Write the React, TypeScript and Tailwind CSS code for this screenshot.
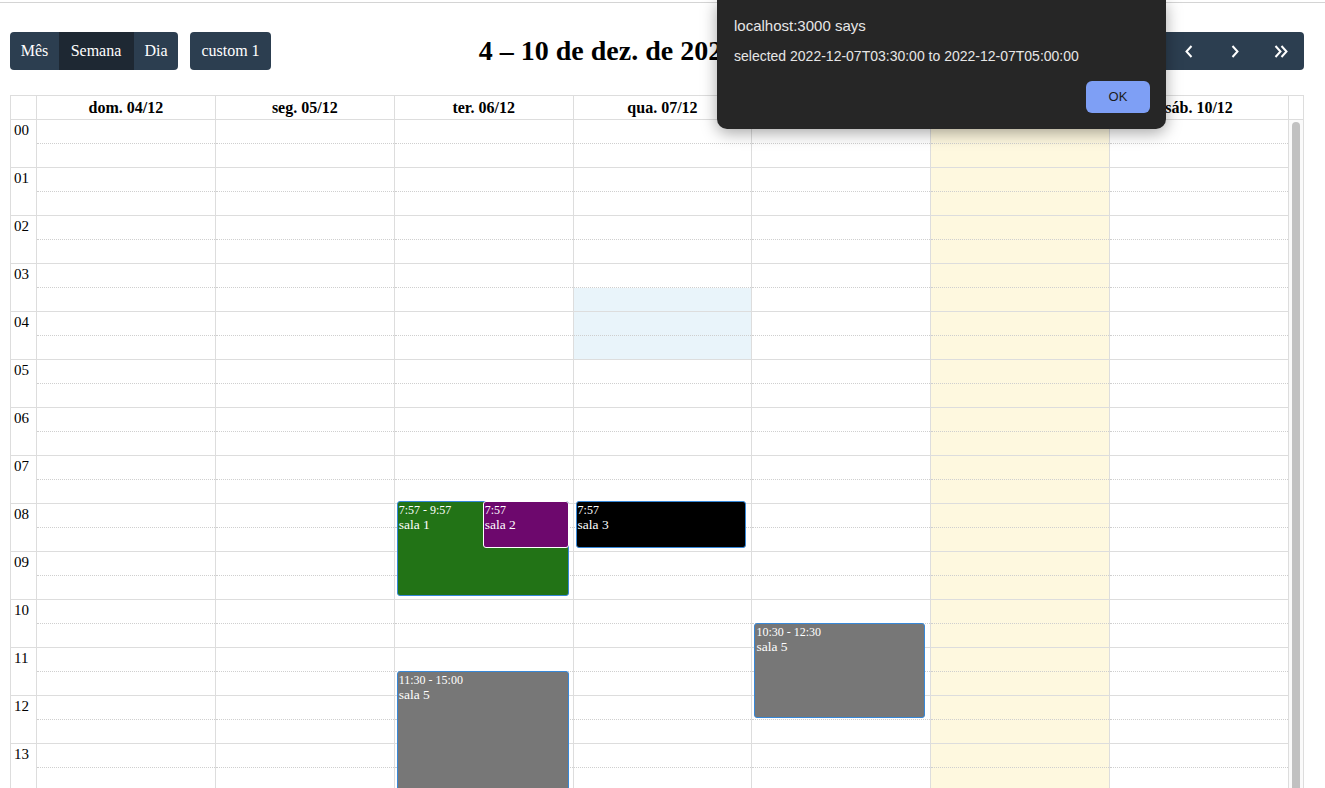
import React from "react";

const days = [
  "dom. 04/12",
  "seg. 05/12",
  "ter. 06/12",
  "qua. 07/12",
  "qui. 08/12",
  "sex. 09/12",
  "sáb. 10/12",
];

const hours = Array.from({ length: 24 }, (_, i) => String(i).padStart(2, "0"));

type Ev = {
  day: number;
  top: number;
  height: number;
  left: number;
  right: number;
  time: string;
  title: string;
  bg: string;
  border: string;
};

const events: Ev[] = [
  { day: 2, top: 381, height: 95, left: 2, right: 4, time: "7:57 - 9:57", title: "sala 1", bg: "bg-[#227316]", border: "border-[#3788d8]" },
  { day: 2, top: 381, height: 47, left: 88, right: 4, time: "7:57", title: "sala 2", bg: "bg-[#6d086d]", border: "border-white" },
  { day: 3, top: 381, height: 47, left: 2, right: 5, time: "7:57", title: "sala 3", bg: "bg-black", border: "border-[#3788d8]" },
  { day: 4, top: 503, height: 95, left: 2, right: 5, time: "10:30 - 12:30", title: "sala 5", bg: "bg-[#777777]", border: "border-[#3788d8]" },
  { day: 2, top: 551, height: 168, left: 2, right: 4, time: "11:30 - 15:00", title: "sala 5", bg: "bg-[#777777]", border: "border-[#3788d8]" },
];

function Chevron({ dir, double }: { dir: "left" | "right"; double?: boolean }) {
  const single = dir === "left" ? "M6 1 L1 6.5 L6 12" : "M1 1 L6 6.5 L1 12";
  if (double) {
    const d1 = dir === "left" ? "M6 1 L1 6.5 L6 12" : "M1 1 L6 6.5 L1 12";
    const d2 = dir === "left" ? "M12 1 L7 6.5 L12 12" : "M7 1 L12 6.5 L7 12";
    return (
      <svg width="14" height="13" viewBox="0 0 13 13" fill="none" stroke="white" strokeWidth="2">
        <path d={d1} />
        <path d={d2} />
      </svg>
    );
  }
  return (
    <svg width="8" height="13" viewBox="0 0 7 13" fill="none" stroke="white" strokeWidth="2">
      <path d={single} />
    </svg>
  );
}

export default function App() {
  return (
    <div className="h-[788px] w-[1325px] overflow-hidden bg-white relative font-['Liberation_Serif',serif] text-black">
      <div className="mt-[2px] border-t border-[#d4d4d4]" />
      <div className="ml-[10px] w-[1294px] pt-[29px]">
        {/* toolbar */}
        <div className="h-[38px] flex items-center justify-between mb-[25px]">
          <div className="flex items-center gap-[12px]">
            <div className="flex h-[38px] rounded-[4px] overflow-hidden text-[16px] text-white">
              <div className="w-[49px] flex items-center justify-center bg-[#2c3e50]">Mês</div>
              <div className="w-[74px] flex items-center justify-center bg-[#1e2833]">Semana</div>
              <div className="w-[45px] flex items-center justify-center bg-[#2c3e50] border-l border-[#1e2833]">Dia</div>
            </div>
            <div className="h-[38px] w-[81px] flex items-center justify-center rounded-[4px] bg-[#2c3e50] text-white text-[16px]">custom 1</div>
          </div>
          <div className="text-[28px] font-bold leading-none whitespace-nowrap">4 – 10 de dez. de 2022</div>
          <div className="w-[360px] flex justify-end gap-[12px]">
            <div className="h-[38px] px-[10px] flex items-center rounded-[4px] bg-[#2c3e50] text-white text-[16px] opacity-60">hoje</div>
            <div className="flex h-[38px] rounded-[4px] overflow-hidden bg-[#2c3e50]">
              <div className="w-[46px] flex items-center justify-center"><Chevron dir="left" double /></div>
              <div className="w-[46px] flex items-center justify-center"><Chevron dir="left" /></div>
              <div className="w-[46px] flex items-center justify-center"><Chevron dir="right" /></div>
              <div className="w-[46px] flex items-center justify-center"><Chevron dir="right" double /></div>
            </div>
          </div>
        </div>

        {/* calendar */}
        <div className="border-l border-r border-[#dddddd]">
          <div className="grid grid-cols-[25px_repeat(7,1fr)_15px] h-[25px] border-t border-b border-[#dddddd]">
            <div />
            {days.map((d) => (
              <div key={d} className="border-l border-[#dddddd] flex items-center justify-center text-[16px] font-bold whitespace-nowrap">
                {d}
              </div>
            ))}
            <div className="border-l border-[#dddddd]" />
          </div>
          <div className="grid grid-cols-[25px_repeat(7,1fr)_15px]">
            <div className="flex flex-col">
              {hours.map((h) => (
                <div key={h} className="h-[48px] shrink-0 border-b border-[#dddddd] text-[15px] leading-[20px] pl-[3px]">
                  {h}
                </div>
              ))}
            </div>
            {days.map((d, di) => (
              <div
                key={d}
                className={`relative border-l border-[#dddddd] flex flex-col ${di === 5 ? "bg-[#fef8df]" : ""}`}
              >
                {di === 3 && <div className="absolute left-0 right-0 top-[168px] h-[72px] bg-[#e9f4fa]" />}
                {hours.map((h) => (
                  <div key={h} className="relative h-[48px] shrink-0 border-b border-[#dddddd]">
                    <div className="h-[24px] border-b border-dotted border-[#cfcfcf]" />
                  </div>
                ))}
                {events
                  .filter((e) => e.day === di)
                  .map((e, i) => (
                    <div
                      key={i}
                      className={`absolute border rounded-[3px] ${e.bg} ${e.border} text-white px-[1px] pt-[1px] overflow-hidden`}
                      style={{ top: e.top, height: e.height, left: e.left, right: e.right }}
                    >
                      <div className="text-[12px] leading-[14px] whitespace-nowrap">{e.time}</div>
                      <div className="text-[13.5px] leading-[16px] whitespace-nowrap">{e.title}</div>
                    </div>
                  ))}
              </div>
            ))}
            <div className="border-l border-[#dddddd] bg-[#fafafa] pl-[3px] pt-[2px]">
              <div className="w-[8px] h-[1200px] rounded-full bg-[#c1c1c1]" />
            </div>
          </div>
        </div>
      </div>

      {/* alert dialog */}
      <div className="absolute top-0 left-[717px] w-[449px] h-[129px] bg-[#262626] rounded-b-[10px] shadow-[0_4px_16px_rgba(0,0,0,0.35)] font-['Liberation_Sans',sans-serif] text-[#e6e6e6]">
        <div className="pl-[17px] pt-[16px] text-[15px] leading-[20px]">localhost:3000 says</div>
        <div className="pl-[17px] pt-[11px] text-[14px] leading-[18px]">selected 2022-12-07T03:30:00 to 2022-12-07T05:00:00</div>
        <div className="flex justify-end pr-[16px] pt-[16px]">
          <div className="w-[64px] h-[32px] rounded-[6px] bg-[#7e9ff5] flex items-center justify-center text-[13px] text-[#1c1c1c]">OK</div>
        </div>
      </div>
    </div>
  );
}
